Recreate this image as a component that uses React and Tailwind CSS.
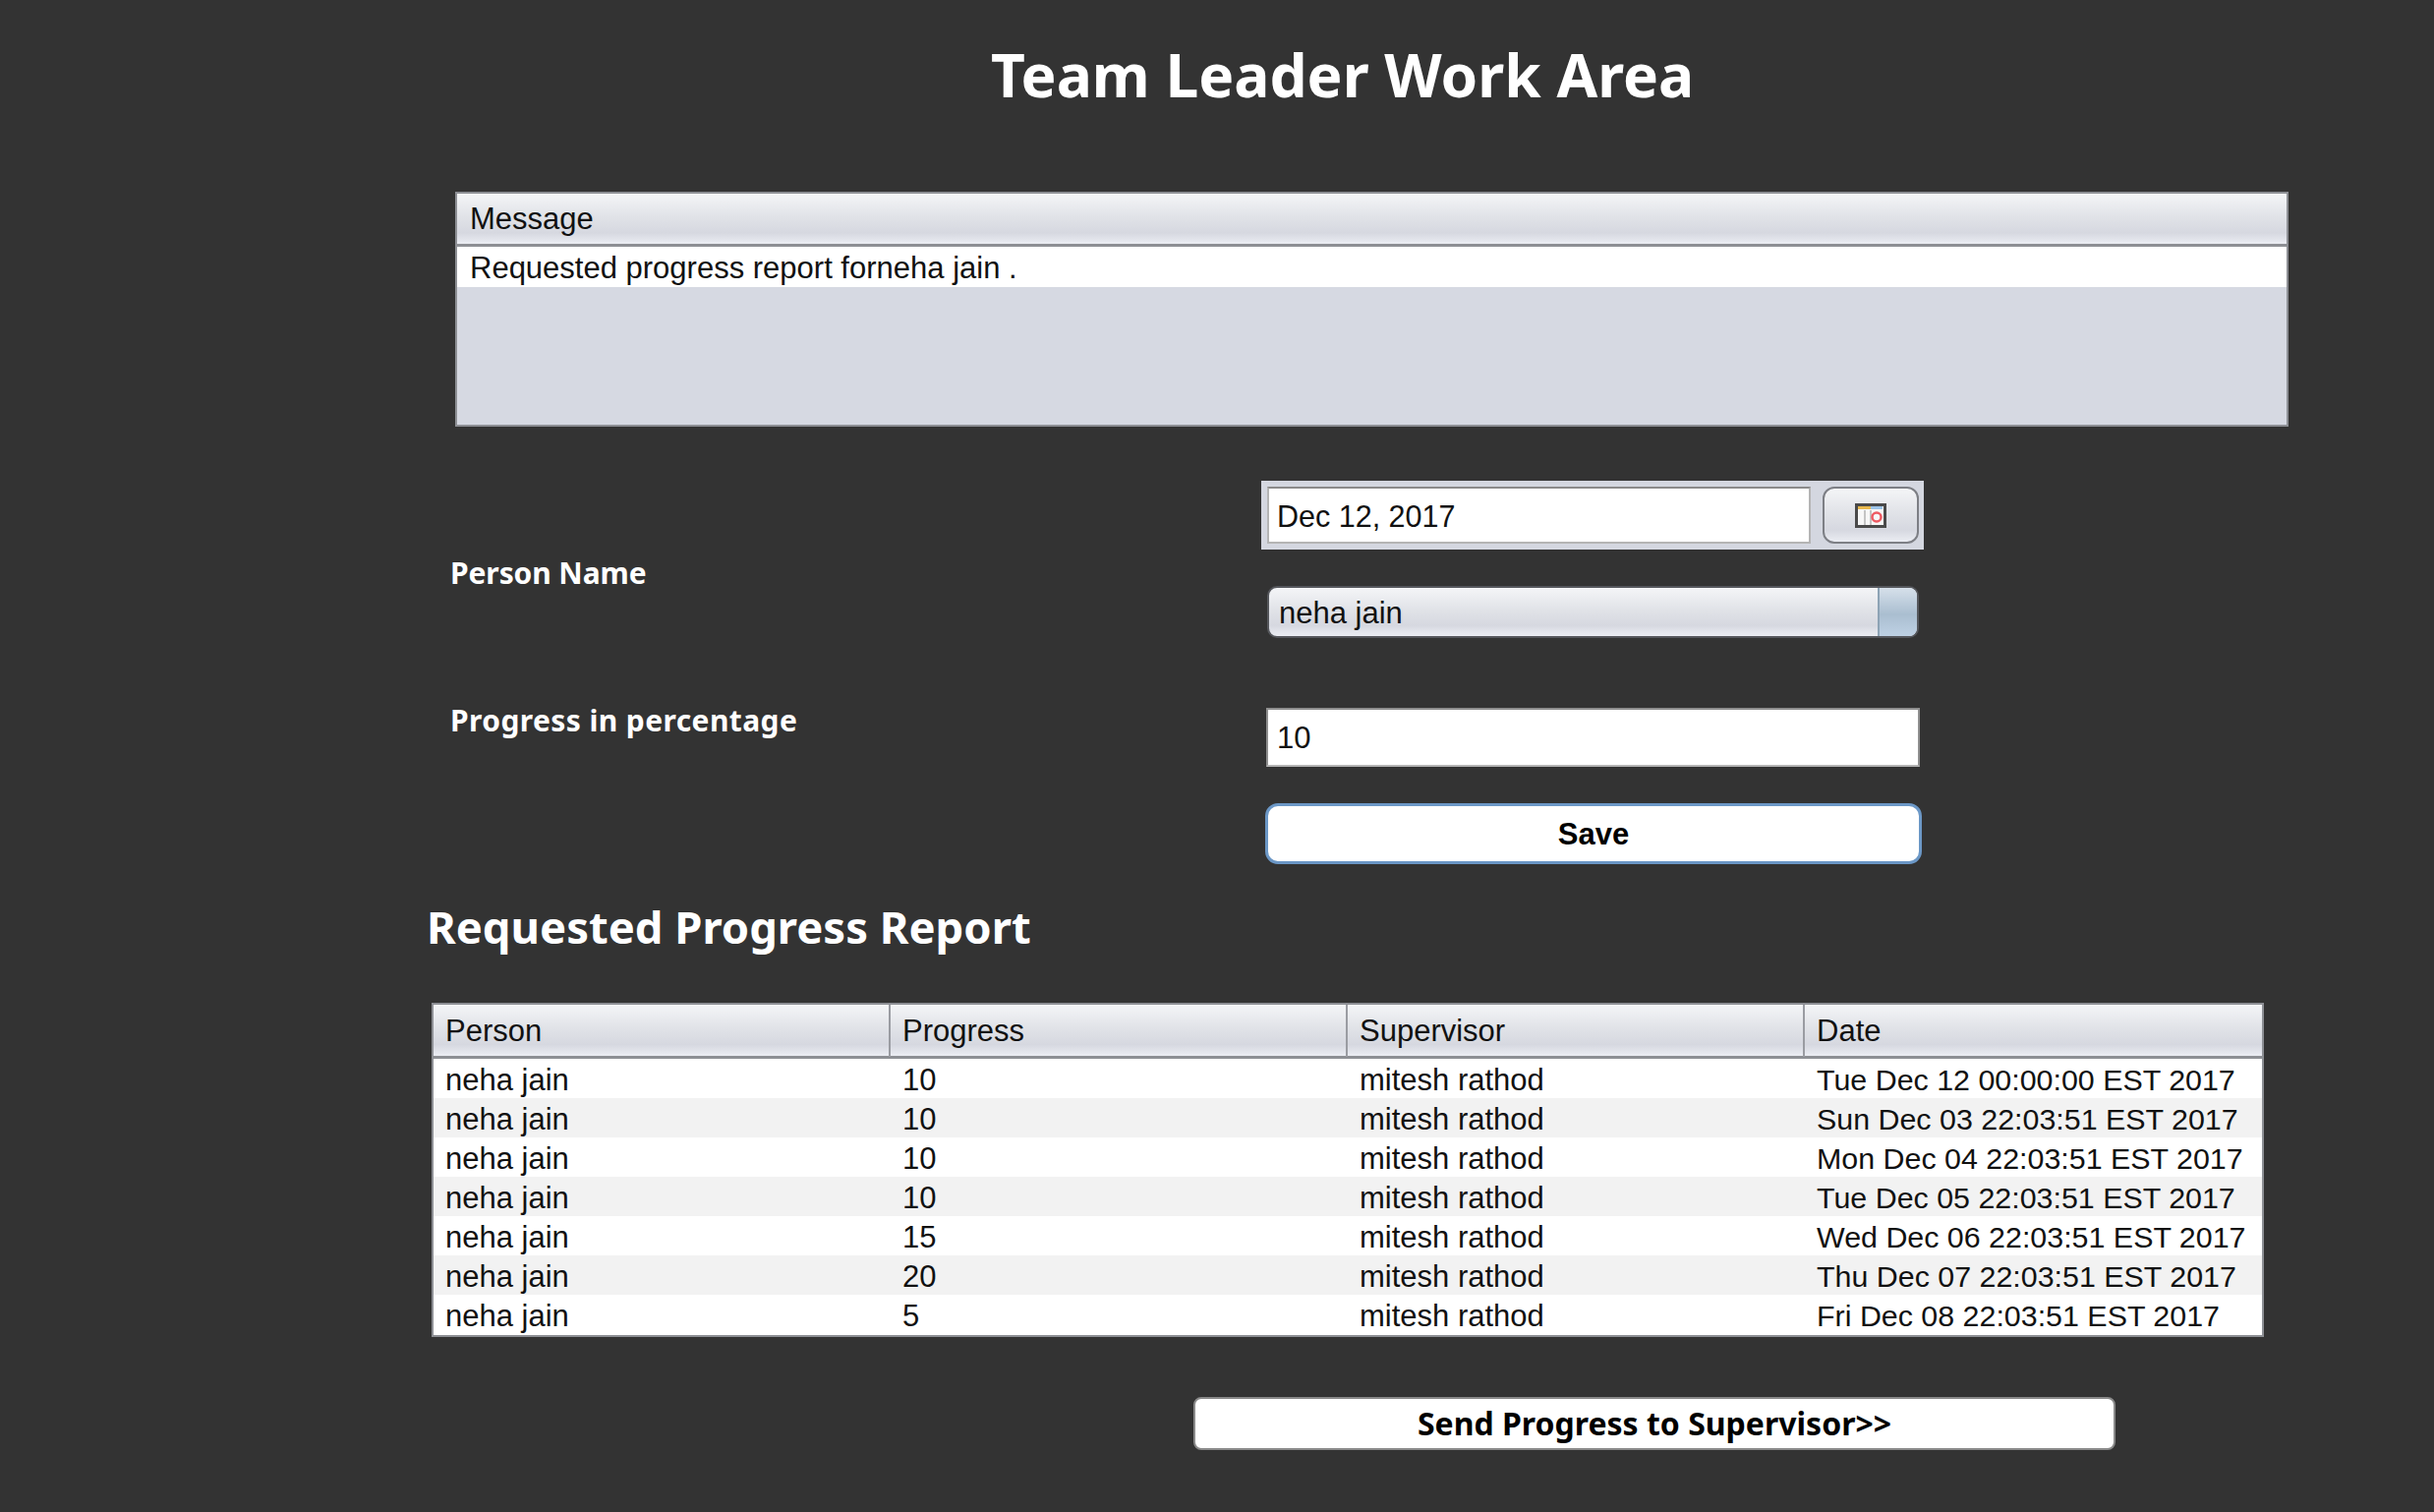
const rows = [
  ['neha jain', '10', 'mitesh rathod', 'Tue Dec 12 00:00:00 EST 2017'],
  ['neha jain', '10', 'mitesh rathod', 'Sun Dec 03 22:03:51 EST 2017'],
  ['neha jain', '10', 'mitesh rathod', 'Mon Dec 04 22:03:51 EST 2017'],
  ['neha jain', '10', 'mitesh rathod', 'Tue Dec 05 22:03:51 EST 2017'],
  ['neha jain', '15', 'mitesh rathod', 'Wed Dec 06 22:03:51 EST 2017'],
  ['neha jain', '20', 'mitesh rathod', 'Thu Dec 07 22:03:51 EST 2017'],
  ['neha jain', '5', 'mitesh rathod', 'Fri Dec 08 22:03:51 EST 2017'],
];

const headerBg = 'bg-[linear-gradient(180deg,#f4f5f7_0%,#e1e3e8_45%,#d6d8e0_78%,#ebedf3_100%)]';

function CalendarIcon() {
  return (
    <svg width="32" height="25" viewBox="0 0 32 25">
      <rect x="1.5" y="1.5" width="29" height="22" fill="#f7f7f7" stroke="#4a4a4a" strokeWidth="3" />
      <rect x="3" y="3" width="13" height="3" fill="#e8b84e" />
      <rect x="16" y="3" width="12" height="3" fill="#9cc3e8" />
      <rect x="9" y="7" width="2" height="15" fill="#c4c4c4" />
      <rect x="15" y="7" width="2" height="15" fill="#c4c4c4" />
      <circle cx="22" cy="14" r="4.5" fill="none" stroke="#ee5a62" strokeWidth="2.5" />
    </svg>
  );
}

export default function App() {
  return (
    <div className="w-[2476px] h-[1538px] overflow-hidden bg-[#333333] font-['Liberation_Sans',sans-serif] text-[31px] text-[#111111]">
      <h1 className="pt-[38px] pl-[1008px] h-[195px] font-['Noto_Sans',sans-serif] text-[60.4px] leading-[76px] font-bold text-white">
        Team Leader Work Area
      </h1>

      {/* Message table */}
      <div className="ml-[463px] w-[1865px] h-[239px] border-2 border-[#8d8f94] bg-[#d6d9e2]">
        <div className={`h-[54px] pl-[13px] leading-[52px] border-b-[3px] border-[#8d8f94] ${headerBg}`}>Message</div>
        <div className="h-[41px] pl-[13px] leading-[44px] bg-white">Requested progress report forneha jain .</div>
      </div>

      {/* Form */}
      <div className="flex mt-[55px]">
        <div className="w-[1283px] pl-[458px] pt-[74px] font-['Noto_Sans',sans-serif] text-[30px] leading-[40px] font-bold text-white">
          <div className="tracking-[-0.1px]">Person Name</div>
          <div className="mt-[110px] tracking-[0.4px]">Progress in percentage</div>
        </div>
        <div className="w-[674px]">
          <div className="flex h-[70px] items-center bg-[#d4d7e0] pl-[6px] pr-[5px]">
            <div className="w-[553px] h-[58px] pl-[8px] text-[30.5px] leading-[57px] bg-white border-2 border-[#b4b4b4] border-t-[#8b8b8b]">Dec 12, 2017</div>
            <div className={`ml-[12px] w-[98px] h-[58px] flex items-center justify-center rounded-[12px] border-2 border-[#7d7f85] ${headerBg}`}>
              <CalendarIcon />
            </div>
          </div>
          <div className={`mt-[37px] ml-[6px] w-[663px] h-[53px] flex rounded-[10px] border-2 border-[#55575c] overflow-hidden ${headerBg}`}>
            <div className="flex-1 pl-[10px] leading-[51px]">neha jain</div>
            <div className="w-[40px] border-l-2 border-[#8da3b5] bg-[linear-gradient(180deg,#d6e0ea_0%,#aabed0_55%,#bed1e4_100%)]" />
          </div>
          <div className="mt-[71px] ml-[5px] w-[665px] h-[60px] pl-[9px] leading-[58px] bg-white border-2 border-[#8f8f8f] border-b-[#b5b5b5]">10</div>
          <div className="mt-[37px] ml-[4px] w-[668px] h-[62px] pt-[2px] flex items-center justify-center rounded-[13px] bg-white border-[3px] border-[#6b97c6] font-bold text-black">
            Save
          </div>
        </div>
      </div>

      <h2 className="mt-[34px] pl-[434px] h-[107px] font-['Noto_Sans',sans-serif] text-[45.4px] leading-[58px] font-bold text-white">
        Requested Progress Report
      </h2>

      {/* Progress table */}
      <div className="ml-[439px] w-[1864px] h-[340px] border-2 border-[#8d8f94] bg-white">
        <div className={`grid grid-cols-4 h-[55px] border-b-[3px] border-[#8d8f94] ${headerBg}`}>
          {['Person', 'Progress', 'Supervisor', 'Date'].map((h, i) => (
            <div key={h} className={`pl-[12px] leading-[53px] ${i < 3 ? 'border-r-2 border-[#9a9ca2]' : ''}`}>{h}</div>
          ))}
        </div>
        {rows.map((row, i) => (
          <div key={i} className={`grid grid-cols-4 h-[40px] leading-[43px] ${i % 2 ? 'bg-[#f2f2f2]' : 'bg-white'}`}>
            {row.map((c, j) => (
              <div key={j} className={`pl-[12px] whitespace-nowrap ${j === 3 ? 'text-[30.4px]' : ''}`}>{c}</div>
            ))}
          </div>
        ))}
      </div>

      <div className="mt-[61px] ml-[1214px] w-[938px] h-[54px] flex items-center justify-center rounded-[8px] bg-white border-2 border-[#8a8a8a] font-['Noto_Sans',sans-serif] text-[32px] font-bold text-black">
        Send Progress to Supervisor&gt;&gt;
      </div>
    </div>
  );
}
